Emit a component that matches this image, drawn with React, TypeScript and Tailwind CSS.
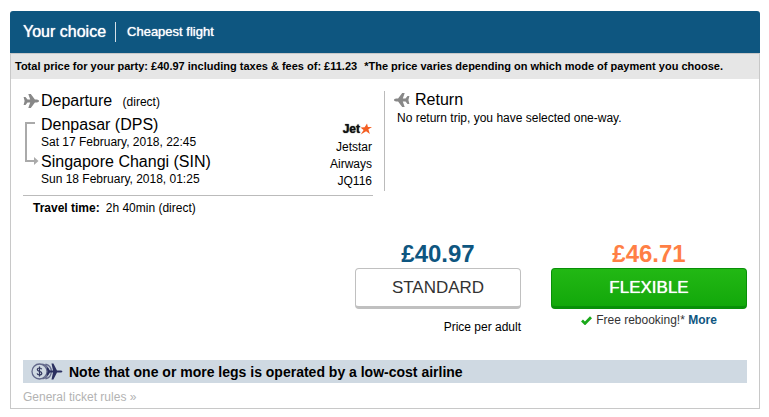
import React from "react";

type Stop = {
  city: string;
  date: string;
};

const stops: Stop[] = [
  { city: "Denpasar (DPS)", date: "Sat 17 February, 2018, 22:45" },
  { city: "Singapore Changi (SIN)", date: "Sun 18 February, 2018, 01:25" },
];

const PlaneIcon = ({ className }: { className?: string }) => (
  <svg viewBox="0 0 16 14" className={className} fill="currentColor">
    <path d="M.6 3h1.900l2 2.500h2.700L5.300 0h2.500l4.100 5.500h1.900c1.400 0 2.200.8 2.200 1.500s-.8 1.500-2.200 1.500h-1.900L7.800 14H5.300l1.900-5.500H4.500L2.500 11H.6l1-4z" />
  </svg>
);

const RouteArrow = () => (
  <svg
    width="14"
    height="44"
    viewBox="0 0 14 44"
    className="shrink-0"
    fill="none"
    stroke="#aaaaaa"
    strokeWidth="2"
  >
    <path d="M10 2H1v38h8" />
    <path d="M9 36l4.500 4-4.500 4z" fill="#aaaaaa" stroke="none" />
  </svg>
);

const JetstarLogo = () => (
  <span className="flex items-center justify-end text-xs leading-4 font-bold text-[#111111] [text-shadow:0_0_1px_#111111]">
    Jet
    <svg width="12" height="12" viewBox="0 0 13 12" fill="#f45f23">
      <path d="M7.600 0l1 3.800 4.400.1-3.900 2.500 1.600 5.100-4.100-3L.8 12l3.100-4.900L.4 4.300l4.600-.2z" />
    </svg>
  </span>
);

const LowCostIcon = () => (
  <svg
    width="32"
    height="17"
    viewBox="0 0 32 17"
    fill="none"
    stroke="#62688a"
    strokeWidth="1.3"
  >
    <circle cx="8.500" cy="8.500" r="7.500" />
    <path d="M11.500 1.200a7.500 7.500 0 0 1 0 14.600M14.500 1.200a7.500 7.500 0 0 1 0 14.600" />
    <path
      d="M10.700 6.300c-.3-.9-1.100-1.300-2.200-1.300-1.300 0-2.200.6-2.200 1.600 0 2.300 4.500 1.300 4.500 3.700 0 1.100-1 1.700-2.300 1.700s-2.200-.5-2.400-1.600M8.500 3.600v9.800"
      stroke="#343960"
      strokeWidth="1.200"
    />
    <path
      d="M15.500 4.500H17l2 3h3L20.500.5h1.900l3.600 7h3.500c1 0 1.700.5 2.100 1-.4.500-1.100 1-2.100 1H26l-3.600 7h-1.900l1.500-7h-3l-2 3h-1.500l1-4z"
      fill="#2b3060"
      stroke="none"
    />
  </svg>
);

const CheckIcon = () => (
  <svg width="11" height="9" viewBox="0 0 11 9" fill="none">
    <path d="M1 4.600l3 2.800L10 1.200" stroke="#1aa81a" strokeWidth="2.800" />
  </svg>
);

const Departure = () => (
  <section className="w-[350px] shrink-0">
    <h2 className="flex items-center gap-[2px] text-base leading-5">
      <PlaneIcon className="h-[14px] w-4 text-[#888888]" />
      <span>
        Departure <span className="ml-[6px] text-xs">(direct)</span>
      </span>
    </h2>
    <div className="flex justify-between border-b border-[#bbbbbb] pt-1 pb-[5px]">
      <div className="flex gap-[2px] pl-[2px]">
        <div className="pt-[6px]">
          <RouteArrow />
        </div>
        <ul>
          {stops.map((stop) => (
            <li key={stop.city} className="pb-[2px]">
              <div className="text-base leading-5">{stop.city}</div>
              <div className="text-xs leading-[15px]">{stop.date}</div>
            </li>
          ))}
        </ul>
      </div>
      <div className="w-16 pt-[6px] pr-px text-right text-xs leading-[17px]">
        <JetstarLogo />
        <p className="pt-[2px]">Jetstar Airways JQ116</p>
      </div>
    </div>
    <p className="pt-1 pl-[10px] text-xs leading-4">
      <b className="mr-[6px]">Travel time:</b>2h 40min (direct)
    </p>
  </section>
);

const Return = () => (
  <section className="h-[100px] flex-1 border-l border-[#bbbbbb] pl-[9px]">
    <h2 className="flex items-center gap-[5px] text-base leading-[18px]">
      <PlaneIcon className="h-[14px] w-4 -scale-x-100 text-[#888888]" />
      Return
    </h2>
    <p className="pl-[3px] text-xs leading-[18px]">
      No return trip, you have selected one-way.
    </p>
  </section>
);

const App = () => {
  return (
    <main className="pt-[11px] pr-[9px] pb-2 pl-[10px] font-['Liberation_Sans',Arial,sans-serif] text-black">
      <div className="overflow-hidden rounded-t-[3px]">
        <header className="flex h-[42px] items-center bg-[#0e5680] pl-[13px] text-white [text-shadow:0_0_1px_#ffffff]">
          <h1 className="border-r border-[#d5e0e8] pr-[9px] text-base leading-5">
            Your choice
          </h1>
          <span className="pl-[11px] text-[13px]">Cheapest flight</span>
        </header>
        <div className="border border-[#c8c8c8]">
          <p className="bg-[#e6e6e6] px-1 py-[5px] text-[11px] leading-[15px] font-bold">
            Total price for your party: £40.97 including taxes &amp; fees of:
            £11.23{" "}
            <span className="ml-1">
              *The price varies depending on which mode of payment you choose.
            </span>
          </p>
          <div className="px-3">
            <div className="flex gap-[11px] pt-3">
              <Departure />
              <Return />
            </div>

            <div className="flex items-start justify-end gap-[30px] pt-6">
              <div className="w-[166px] text-center">
                <div className="text-2xl leading-7 font-bold text-[#0e5680]">
                  £40.97
                </div>
                <button
                  type="button"
                  className="h-[41px] w-full rounded-[4px] border border-b-3 border-[#c0c0c0] bg-white text-[17px] text-[#333333]"
                >
                  STANDARD
                </button>
                <p className="pt-[10px] text-right text-xs leading-4">
                  Price per adult
                </p>
              </div>
              <div className="w-[196px] text-center">
                <div className="text-2xl leading-7 font-bold text-[#ff7f45]">
                  £46.71
                </div>
                <button
                  type="button"
                  className="h-[41px] w-full rounded-[4px] border border-b-3 border-[#089008] bg-linear-to-b from-[#22b814] to-[#12a80a] text-[17px] text-white [text-shadow:0_0_1px_#ffffff]"
                >
                  FLEXIBLE
                </button>
                <p className="flex items-center justify-center gap-1 pt-[3px] text-xs leading-4 text-[#333333]">
                  <CheckIcon />
                  <span>
                    Free rebooking!*{" "}
                    <a href="#more" className="font-bold text-[#0e5680]">
                      More
                    </a>
                  </span>
                </p>
              </div>
            </div>

            <div className="mt-[25px] flex h-[23px] items-center gap-[6px] bg-[#cfd9e2] pl-2 text-sm font-bold">
              <LowCostIcon />
              Note that one or more legs is operated by a low-cost airline
            </div>
            <a
              href="#rules"
              className="block pt-[6px] pb-[3px] text-xs leading-4 text-[#b3b3b3]"
            >
              General ticket rules »
            </a>
          </div>
        </div>
      </div>
    </main>
  );
};

export default App;
